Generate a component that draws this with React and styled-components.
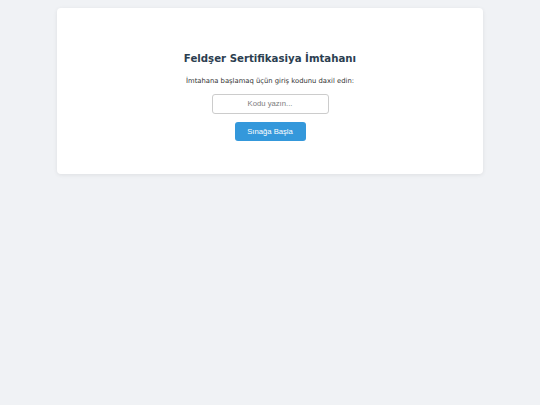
import React from "react";
import styled, { createGlobalStyle } from "styled-components";

const Global = createGlobalStyle`
  html, body { margin: 0; padding: 0; background: #f0f2f5; }
  body { font-family: "DejaVu Sans", Verdana, sans-serif; }
`;

const Page = styled.div`
  padding: 8px 0;
  min-height: 405px;
  box-sizing: border-box;
`;

const Card = styled.div`
  width: 426px;
  height: 166px;
  margin: 0 auto;
  background: #ffffff;
  border-radius: 4px;
  box-shadow: 0 1px 4px rgba(0, 0, 0, 0.08);
  box-sizing: border-box;
  padding-top: 44px;
  display: flex;
  flex-direction: column;
  align-items: center;
`;

const Title = styled.h1`
  margin: 0;
  font-family: "DejaVu Sans", Verdana, sans-serif;
  font-weight: bold;
  font-size: 10.2px;
  line-height: 14px;
  color: #2c3e50;
`;

const Prompt = styled.p`
  margin: 10px 0 0;
  font-size: 6.8px;
  line-height: 10px;
  color: #333333;
`;

const CodeInput = styled.input`
  margin-top: 7.5px;
  width: 117px;
  height: 20px;
  box-sizing: border-box;
  border: 1px solid #cccccc;
  border-radius: 3px;
  text-align: center;
  font-family: "Liberation Sans", Arial, sans-serif;
  font-size: 7.7px;
  color: #333;
  outline: none;
  &::placeholder { color: #7d7d7d; }
`;

const StartButton = styled.button`
  margin-top: 8px;
  width: 71px;
  height: 19px;
  border: none;
  border-radius: 3px;
  background: #3498db;
  color: #ffffff;
  font-family: "Liberation Sans", Arial, sans-serif;
  font-size: 7.7px;
  padding: 0;
  cursor: pointer;
`;

export default function App() {
  return (
    <>
      <Global />
      <Page>
        <Card>
          <Title>Feldşer Sertifikasiya İmtahanı</Title>
          <Prompt>İmtahana başlamaq üçün giriş kodunu daxil edin:</Prompt>
          <CodeInput placeholder="Kodu yazın..." />
          <StartButton>Sınağa Başla</StartButton>
        </Card>
      </Page>
    </>
  );
}
